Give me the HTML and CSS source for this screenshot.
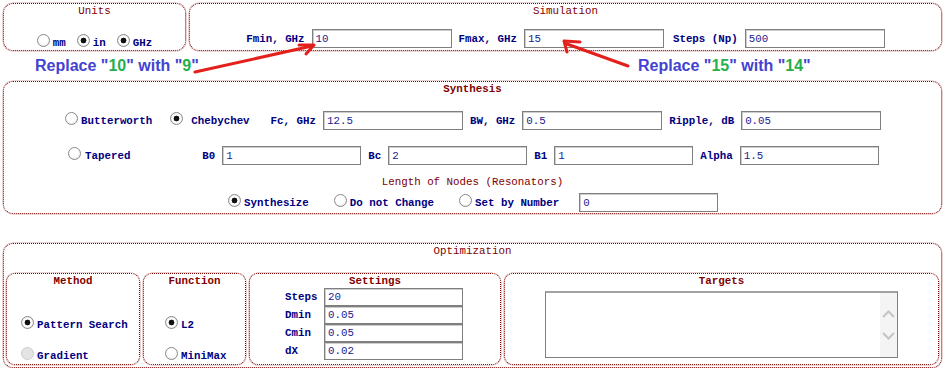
FILE: index.html
```html
<!DOCTYPE html>
<html lang="en">
<head>
  <meta charset="UTF-8">
  <title>Filter Synthesis</title>
  <link rel="stylesheet" href="styles.css">
</head>
<body>
  <div class="page">
    <div class="top-row">
      <div class="box units">
        <div class="box-title">Units</div>
        <div class="units-row">
          <label class="opt"><input type="radio" class="radio" name="len">mm</label>
          <label class="opt"><input type="radio" class="radio" name="len" checked>in</label>
          <label class="opt"><input type="radio" class="radio" name="freq" checked>GHz</label>
        </div>
      </div>
      <div class="box simulation">
        <div class="box-title">Simulation</div>
        <div class="sim-row">
          <label class="field">Fmin, GHz <input type="text" class="inp" value="10"></label>
          <label class="field">Fmax, GHz <input type="text" class="inp" value="15"></label>
          <label class="field steps">Steps (Np) <input type="text" class="inp" value="500"></label>
        </div>
      </div>
    </div>

    <div class="notes">
      <span class="note first">Replace "<b>10</b>" with "<b>9</b>"</span>
      <span class="note">Replace "<b>15</b>" with "<b>14</b>"</span>
    </div>

    <div class="box synthesis">
      <div class="box-title strong">Synthesis</div>
      <div class="syn-row row1">
        <label class="opt"><input type="radio" class="radio" name="type">Butterworth</label>
        <label class="opt cheb"><input type="radio" class="radio" name="type" checked>Chebychev</label>
        <label class="field fc">Fc, GHz <input type="text" class="inp" value="12.5"></label>
        <label class="field">BW, GHz <input type="text" class="inp" value="0.5"></label>
        <label class="field">Ripple, dB <input type="text" class="inp" value="0.05"></label>
      </div>
      <div class="syn-row row2">
        <label class="opt"><input type="radio" class="radio" name="type">Tapered</label>
        <label class="field b0">B0 <input type="text" class="inp" value="1"></label>
        <label class="field">Bc <input type="text" class="inp" value="2"></label>
        <label class="field">B1 <input type="text" class="inp" value="1"></label>
        <label class="field">Alpha <input type="text" class="inp" value="1.5"></label>
      </div>
      <div class="sub-title">Length of Nodes (Resonators)</div>
      <div class="syn-row row4">
        <label class="opt"><input type="radio" class="radio" name="nodes" checked>Synthesize</label>
        <label class="opt"><input type="radio" class="radio" name="nodes">Do not Change</label>
        <label class="opt"><input type="radio" class="radio" name="nodes">Set by Number</label>
        <input type="text" class="inp num" value="0">
      </div>
    </div>

    <div class="box optimization">
      <div class="box-title">Optimization</div>
      <div class="opt-row">
        <div class="box inner method">
          <div class="box-title strong">Method</div>
          <div class="choice first"><label class="opt"><input type="radio" class="radio" name="method" checked>Pattern Search</label></div>
          <div class="choice"><label class="opt"><input type="radio" class="radio" name="method" disabled>Gradient</label></div>
        </div>
        <div class="box inner function">
          <div class="box-title strong">Function</div>
          <div class="choice first"><label class="opt"><input type="radio" class="radio" name="func" checked>L2</label></div>
          <div class="choice"><label class="opt"><input type="radio" class="radio" name="func">MiniMax</label></div>
        </div>
        <div class="box inner settings">
          <div class="box-title strong">Settings</div>
          <div class="settings-grid">
            <span>Steps</span><input type="text" class="inp small" value="20">
            <span>Dmin</span><input type="text" class="inp small" value="0.05">
            <span>Cmin</span><input type="text" class="inp small" value="0.05">
            <span>dX</span><input type="text" class="inp small" value="0.02">
          </div>
        </div>
        <div class="box inner targets">
          <div class="box-title strong">Targets</div>
          <div class="target-area">
            <textarea class="target-text"></textarea>
            <div class="scrollbar">
              <svg width="17" height="12" viewBox="0 0 17 12"><path d="M3 9 L8.5 3.5 L14 9" fill="none" stroke="#c4c4c4" stroke-width="2"/></svg>
              <svg width="17" height="12" viewBox="0 0 17 12"><path d="M3 3 L8.5 8.5 L14 3" fill="none" stroke="#c4c4c4" stroke-width="2"/></svg>
            </div>
          </div>
        </div>
      </div>
    </div>

    <!-- red hand-drawn arrows over the form -->
    <svg class="arrows" width="948" height="100" viewBox="0 0 948 100">
      <g fill="none" stroke="#e3201c" stroke-width="3" stroke-linecap="round" stroke-linejoin="round">
        <path d="M195 72 L312 46"/>
        <path d="M299 45 L314 45 L306 54"/>
        <path d="M567 44 L628 66"/>
        <path d="M580 42 L564 41 L567 52"/>
      </g>
    </svg>
  </div>
</body>
</html>
```

FILE: styles.css
```css
body {
  margin: 0;
  background: #fff;
  font-family: "Courier New", "Nimbus Mono PS", FreeMono, "Liberation Mono", monospace;
  font-size: 10.8px;
  font-weight: bold;
  color: #000080;
}
.page {
  position: relative;
  width: 939px;
  padding: 3px 0 0 3px;
}
.box {
  box-sizing: border-box;
  border: 1px dotted #800000;
  border-radius: 10px;
  box-shadow: 0 0 0 0.5px rgba(139, 0, 0, 0.35);
}
.box-title, .sub-title {
  text-align: center;
  line-height: 14px;
  color: #800000;
  font-weight: normal;
}
.box-title.strong {font-weight: bold;}

/* form controls */
.inp {
  box-sizing: border-box;
  width: 140px;
  height: 19px;
  margin: 0;
  padding: 0 3px;
  border: 1px solid #7f7f7f;
  box-shadow: inset 1px 1px 0 #cdcdcd;
  background: #fff;
  font-family: "Courier New", "Nimbus Mono PS", FreeMono, "Liberation Mono", monospace;
  font-size: 10.8px;
  font-weight: normal;
  color: #1a1a90;
}
.inp.small {width: 139px; height: 18px;}
.radio {
  -webkit-appearance: none;
  appearance: none;
  box-sizing: border-box;
  display: inline-block;
  width: 13px;
  height: 13px;
  margin: 0 3px 0 0;
  vertical-align: -1px;
  border: 1px solid #8a8a8a;
  border-radius: 50%;
  background: radial-gradient(circle at 45% 40%, #fff 0, #fff 45%, #dedede 100%);
}
.radio:checked {
  background: radial-gradient(circle, #111 0, #111 2.6px, #fff 3.2px, #fff 4px, #d8d8d8 7px);
}
.radio:disabled {
  border-color: #cbcbcb;
  background: #e4e4e4;
}
.opt {white-space: nowrap; line-height: 14px;}
.field {display: flex; align-items: baseline; gap: 7px; white-space: nowrap;}

/* top row */
.top-row {display: flex; gap: 3px;}
.units {width: 183px; height: 48px;}
.simulation {flex: 1; height: 48px;}
.units-row {
  display: flex;
  justify-content: center;
  gap: 11px;
  margin-top: 16px;
}
.sim-row {
  display: flex;
  justify-content: center;
  align-items: baseline;
  gap: 7px;
  margin-top: 11px;
}
.sim-row .steps {margin-left: 2px;}

/* annotations */
.notes {
  display: flex;
  height: 30px;
  line-height: 30px;
  padding-left: 32px;
  font-family: "Liberation Sans", Arial, sans-serif;
  font-size: 16px;
  font-weight: bold;
  color: #4343d2;
}
.note.first {width: 603px;}
.note b {color: #25b04c;}
.arrows {position: absolute; left: 0; top: 0; pointer-events: none;}

/* synthesis */
.synthesis {height: 133px;}
.syn-row {display: flex; align-items: baseline; gap: 7px;}
.row1 {margin-top: 15px; padding-left: 61px;}
.row1 .cheb {margin-left: 11px;}
.row1 .cheb .radio {margin-right: 8px;}
.row1 .fc {margin-left: 14px;}
.row2 {margin-top: 16px; padding-left: 64px;}
.row2 .radio {margin-right: 4px;}
.row2 .b0 {margin-left: 65px;}
.row2 .inp {width: 139px;}
.sub-title {margin-top: 10px;}
.row4 {margin-top: 4px; padding-left: 224px; gap: 0;}
.row4 .opt {margin-right: 25px;}
.row4 .opt:nth-child(3) {margin-right: 20px;}
.row4 .inp {width: 139px;}

/* optimization */
.optimization {
  height: 125px;
  margin-top: 29px;
  padding: 0 2px 2px;
}
.opt-row {display: flex; gap: 3px; margin-top: 15px;}
.inner {height: 92px; border-radius: 9px;}
.method {width: 134px; padding-left: 14px;}
.function {width: 103px; padding-left: 21px;}
.settings {width: 252px; padding-left: 35px;}
.targets {flex: 1;}
.method .box-title {margin-left: -14px;}
.function .box-title {margin-left: -21px;}
.settings .box-title {margin-left: -35px;}
.choice.first {margin-top: 28px;}
.choice {margin-top: 15px;}
.settings-grid {
  display: grid;
  grid-template-columns: 39px 139px;
  grid-auto-rows: 18px;
  align-items: center;
}
.target-area {
  box-sizing: border-box;
  display: flex;
  width: 353px;
  height: 67px;
  margin: 3px auto 0;
  border: 1px solid #7f7f7f;
  border-top: 2px solid #a2a2a2;
  background: #fff;
}
.target-text {
  flex: 1;
  margin: 0;
  border: none;
  outline: none;
  resize: none;
  overflow: hidden;
  font-family: "Courier New", "Liberation Mono", monospace;
  font-size: 10.8px;
}
.scrollbar {
  width: 17px;
  background: #f4f4f4;
  display: flex;
  flex-direction: column;
  align-items: center;
  padding-top: 15px;
  gap: 10px;
}
```
